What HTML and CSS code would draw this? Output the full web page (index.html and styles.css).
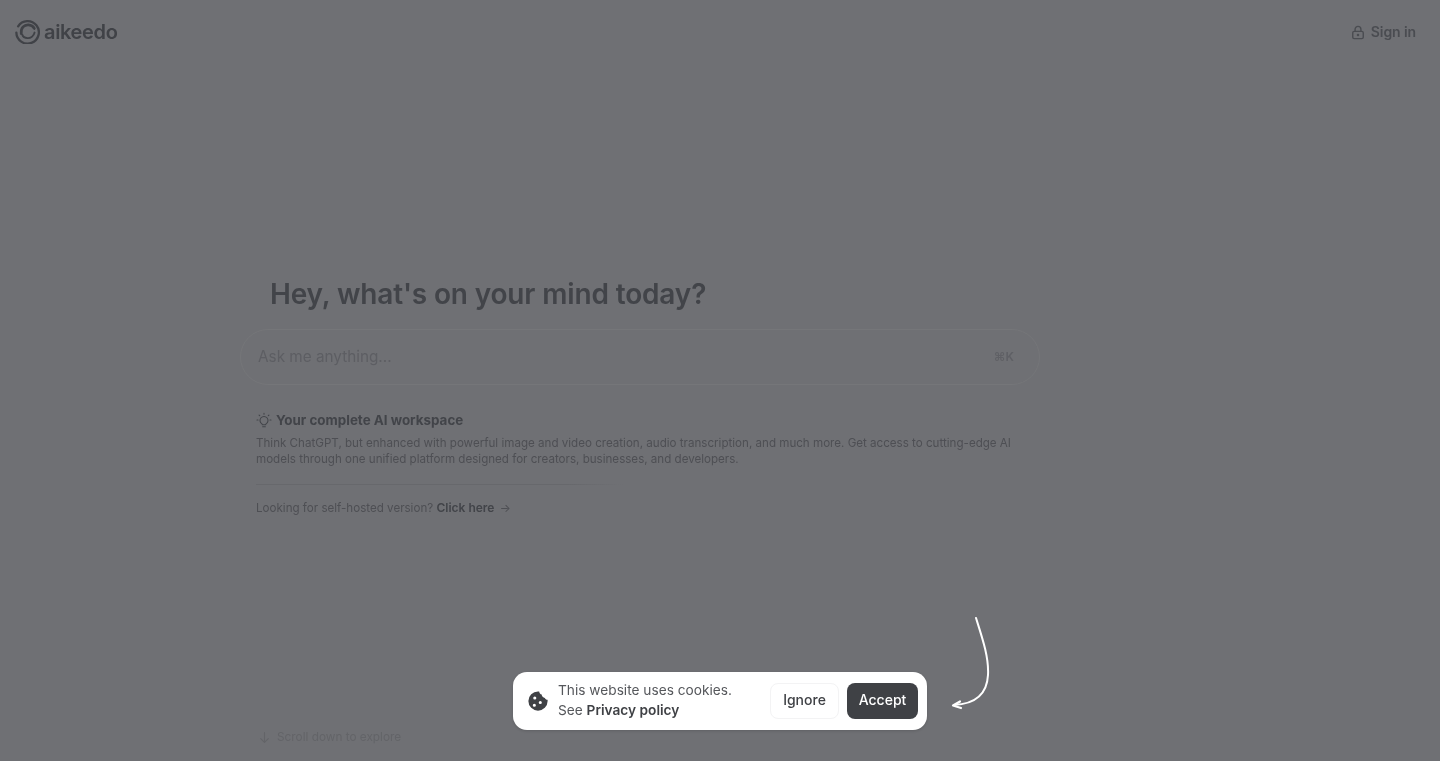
FILE: index.html
```html
<!DOCTYPE html>
<html lang="en">
    <head>
        <meta charset="UTF-8">
        <meta name="viewport" content="width=device-width, initial-scale=1.0">
        <title>aikeedo</title>
        <link rel="stylesheet" href="styles.css">
    </head>
    <body>
        <div class="page">
            <header class="topbar">
                <a class="logo" href="#">
                    <svg class="logo-mark" viewBox="0 0 24 24" fill="none" stroke="currentColor" stroke-linecap="round">
                        <path d="M3 7A10.800 10.800 0 1 1 1.300 13" stroke-width="2.200"/>
                        <path d="M6 14C5.300 8.500 9 5.300 13 5.600c2.500.2 4.500 1.500 5.500 3.500" stroke-width="2.600"/>
                        <path d="M18.800 13c-.8 3.500-3.800 5.500-6.800 5.300-2.500-.1-4.500-1.500-5-3.300" stroke-width="1.800"/>
                    </svg>
                    <span>aikeedo</span>
                </a>
                <a class="signin" href="#">
                    <svg class="icon-lock" viewBox="0 0 24 24" fill="none" stroke="currentColor" stroke-width="2.400" stroke-linecap="round" stroke-linejoin="round">
                        <rect x="3" y="10" width="18" height="12.500" rx="2.500"/>
                        <path d="M7 10V6.500a5 5 0 0 1 10 0V10"/>
                        <circle cx="12" cy="16.200" r="1"/>
                    </svg>
                    <span>Sign in</span>
                </a>
            </header>

            <main class="hero">
                <h1>Hey, what's on your mind today?</h1>
                <div class="ask-box">
                    <span class="ask-placeholder">Ask me anything...</span>
                    <span class="ask-shortcut">⌘K</span>
                </div>
                <section class="intro">
                    <h2>
                        <svg class="icon-bulb" viewBox="0 0 24 24" fill="none" stroke="currentColor" stroke-width="1.600" stroke-linecap="round" stroke-linejoin="round">
                            <path d="M8.500 17.500a6 6 0 1 1 7 0c-.6.5-1 1-1 1.500H9.500c0-.5-.4-1-1-1.500z"/>
                            <path d="M10 22h4"/>
                            <path d="M12 2v1.500M1.500 12H3M21 12h1.500M4.600 4.600l1 1M19.400 4.600l-1 1"/>
                        </svg>
                        <span>Your complete AI workspace</span>
                    </h2>
                    <p>Think ChatGPT, but enhanced with powerful image and video creation, audio transcription, and much more. Get access to cutting-edge AI models through one unified platform designed for creators, businesses, and developers.</p>
                    <hr>
                    <p class="self-hosted">Looking for self-hosted version? <a href="#">Click here</a> <span class="arrow">→</span></p>
                </section>
                <div class="scroll-hint">
                    <svg class="icon-down" viewBox="0 0 24 24" fill="none" stroke="currentColor" stroke-width="2" stroke-linecap="round" stroke-linejoin="round">
                        <path d="M12 3v18M5 14l7 7 7-7"/>
                    </svg>
                    <span>Scroll down to explore</span>
                </div>
            </main>
        </div>

        <div class="cookie-bar">
            <svg class="icon-cookie" viewBox="0 0 24 24">
                <path fill="#3f4145" fill-rule="evenodd" d="M12 1.500c.4 0 .9 0 1.300.1.100 1.700 1.200 3 2.700 3.300.1 2 1.600 3.500 3.500 3.700.4 1.200 1.500 2 2.900 2.100.1.400.1.900.1 1.300A10.500 10.500 0 1 1 12 1.500zM8.500 7a1.700 1.700 0 1 0 0 3.400 1.700 1.700 0 0 0 0-3.400zm6 5a1.700 1.700 0 1 0 0 3.400 1.700 1.700 0 0 0 0-3.400zm-6.500 3a1.700 1.700 0 1 0 0 3.400 1.700 1.700 0 0 0 0-3.400z"/>
            </svg>
            <div class="cookie-text">
                <div>This website uses cookies.</div>
                <div>See <a href="#">Privacy policy</a></div>
            </div>
            <button class="btn btn-ignore">Ignore</button>
            <button class="btn btn-accept">Accept</button>
            <svg class="cookie-arrow" viewBox="0 0 44 96" fill="none" stroke="#fff" stroke-width="2" stroke-linecap="round" stroke-linejoin="round">
                <path d="M26 1c7 22 13 40 12 57-1 19-13 29-34 30"/>
                <path d="M10 84.500L3 88.500l8 2.500" stroke-width="2.200"/>
            </svg>
        </div>
    </body>
</html>
```

FILE: styles.css
```css
* {
    box-sizing: border-box;
}

html,
body {
    height: 100%;
}

body {
    margin: 0;
    overflow: hidden;
    background-color: #6f7074;
    font-family: Inter, "Noto Sans", sans-serif;
    color: #44464b;
}

a {
    color: inherit;
    text-decoration: none;
}

.page {
    height: 761px;
    display: flex;
    flex-direction: column;
    filter: blur(0.3px);
}

.topbar {
    display: flex;
    justify-content: space-between;
    align-items: center;
    padding: 18px 24px 0 15px;
    height: 45px;
}

.logo {
    display: flex;
    align-items: center;
    gap: 4px;
    font-size: 20px;
    font-weight: 600;
    letter-spacing: -0.35px;
    color: #404247;
}

.logo-mark {
    width: 25px;
    height: 25px;
}

.signin {
    display: flex;
    align-items: center;
    gap: 6px;
    font-size: 14px;
    font-weight: 600;
    letter-spacing: -0.1px;
    color: #4a4c51;
}

.icon-lock {
    width: 14px;
    height: 15px;
    margin-top: 2px;
}

.hero {
    width: 800px;
    margin-left: 240px;
    flex: 1;
    display: flex;
    flex-direction: column;
    padding-top: 229px;
}

.hero h1 {
    margin: 0 0 15px 30px;
    font-size: 28px;
    line-height: 40px;
    font-weight: 600;
    letter-spacing: -0.15px;
    color: #424449;
}

.ask-box {
    display: flex;
    justify-content: space-between;
    align-items: center;
    height: 56px;
    padding: 0 25px 2px 17px;
    border: 1px solid #757679;
    border-radius: 28px;
}

.ask-placeholder {
    font-size: 15.300px;
    color: #5d5e63;
}

.ask-shortcut {
    font-size: 12px;
    font-weight: 600;
    color: #5f6065;
}

.intro {
    padding: 0 16px;
    margin-top: 25px;
}

.intro h2 {
    display: flex;
    align-items: center;
    gap: 4px;
    margin: 0 0 5px;
    font-size: 13.400px;
    line-height: 20px;
    font-weight: 700;
    color: #424449;
}

.icon-bulb {
    width: 16px;
    height: 16px;
}

.intro p {
    margin: 0;
    font-size: 11.600px;
    line-height: 16px;
    color: #4e4f54;
}

.intro hr {
    width: 368px;
    height: 1px;
    margin: 17px 0 15px;
    border: 0;
    background: linear-gradient(to right, #67686c 85%, #6f7074);
}

.intro .self-hosted a {
    font-weight: 600;
    font-size: 12px;
    color: #424449;
}

.arrow {
    margin-left: 2px;
}

.scroll-hint {
    display: flex;
    align-items: center;
    gap: 6px;
    margin-top: auto;
    margin-bottom: 17px;
    padding-left: 18px;
    font-size: 11.800px;
    color: #636468;
}

.icon-down {
    width: 13px;
    height: 13px;
}

.cookie-bar {
    position: fixed;
    left: 513px;
    bottom: 31px;
    display: flex;
    align-items: center;
    width: 414px;
    height: 58px;
    padding: 0 9px 0 14px;
    background-color: #fff;
    border-radius: 14px;
    box-shadow: 0 1px 3px rgba(0, 0, 0, 0.15);
    color: #55575b;
}

.icon-cookie {
    width: 22px;
    height: 22px;
    flex-shrink: 0;
}

.cookie-text {
    margin-left: 9px;
    margin-top: -2px;
    font-size: 13.700px;
    line-height: 20px;
}

.cookie-text a {
    font-weight: 600;
    color: #3f4145;
}

.btn {
    height: 36px;
    padding-bottom: 5px;
    font-family: inherit;
    font-size: 14px;
    font-weight: 500;
    border-radius: 8px;
    cursor: pointer;
}

.btn-ignore {
    width: 69px;
    margin-left: auto;
    background-color: #fff;
    border: 1px solid #f3f3f4;
    color: #3f4145;
}

.btn-accept {
    width: 71px;
    margin-left: 8px;
    background-color: #3f4145;
    border: 0;
    color: #fff;
}

.cookie-arrow {
    position: absolute;
    left: 437px;
    top: -55px;
    width: 44px;
    height: 96px;
}
```
